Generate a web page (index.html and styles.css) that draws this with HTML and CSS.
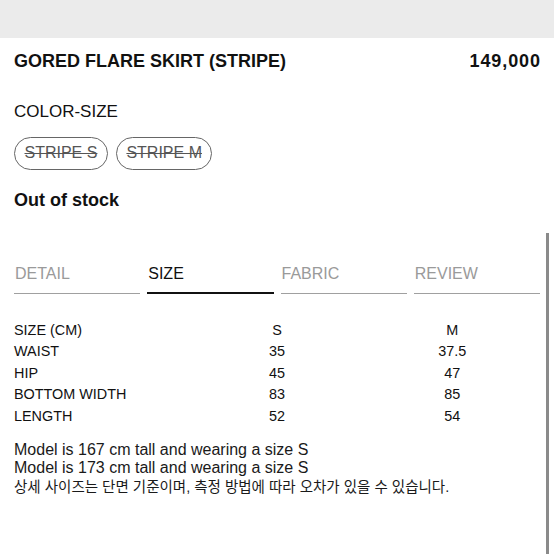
FILE: index.html
```html
<!DOCTYPE html>
<html lang="ko">
<head>
<meta charset="utf-8">
<link rel="stylesheet" href="styles.css">
</head>
<body>
<div class="topbar"></div>
<div class="content">
  <div class="title-row">
    <h1 class="title">GORED FLARE SKIRT (STRIPE)</h1>
    <div class="price">149,000</div>
  </div>
  <div class="label">COLOR-SIZE</div>
  <div class="pills">
    <span class="pill">STRIPE S</span>
    <span class="pill">STRIPE M</span>
  </div>
  <div class="stock">Out of stock</div>
  <div class="tabs">
    <div class="tab">DETAIL</div>
    <div class="tab active">SIZE</div>
    <div class="tab">FABRIC</div>
    <div class="tab">REVIEW</div>
  </div>
  <div class="table">
    <div class="row"><span>SIZE (CM)</span><span>S</span><span>M</span></div>
    <div class="row"><span>WAIST</span><span>35</span><span>37.5</span></div>
    <div class="row"><span>HIP</span><span>45</span><span>47</span></div>
    <div class="row"><span>BOTTOM WIDTH</span><span>83</span><span>85</span></div>
    <div class="row"><span>LENGTH</span><span>52</span><span>54</span></div>
  </div>
  <div class="notes">
    <p>Model is 167 cm tall and wearing a size S</p>
    <p>Model is 173 cm tall and wearing a size S</p>
    <p class="ko">상세 사이즈는 단면 기준이며, 측정 방법에 따라 오차가 있을 수 있습니다.</p>
  </div>
</div>
<div class="scrollbar"></div>
</body>
</html>
```

FILE: styles.css
```css
* { box-sizing: border-box; margin: 0; padding: 0; }
html, body { width: 554px; height: 554px; overflow: hidden; background: #fff; }
body {
  position: relative;
  font-family: "Liberation Sans", Arial, "Noto Sans CJK KR", sans-serif;
  color: #111;
}
.topbar { height: 38px; background: #ebebeb; }
.content { width: 554px; padding: 0 14px; }
.title-row {
  display: flex;
  justify-content: space-between;
  align-items: center;
  height: 46px;
}
.title { font-size: 18px; font-weight: 700; line-height: 22px; }
.price { font-size: 18px; font-weight: 700; letter-spacing: 0.9px; margin-right: -0.9px; line-height: 22px; }
.label { margin-top: 18px; font-size: 17px; line-height: 20px; color: #111; }
.pills { display: flex; gap: 8px; margin-top: 15px; }
.pill {
  display: inline-flex;
  align-items: center;
  justify-content: center;
  height: 32.5px;
  padding: 0 9.5px;
  border: 1px solid #666;
  border-radius: 17px;
  font-size: 16px;
  color: #555;
  text-decoration: line-through;
  text-decoration-thickness: 1px;
}
.stock { margin-top: 19px; font-size: 18px; font-weight: 700; line-height: 22px; }
.tabs {
  display: grid;
  grid-template-columns: repeat(4, 1fr);
  column-gap: 7px;
  align-items: start;
  margin-top: 53px;
}
.tab {
  font-size: 16px;
  line-height: 20px;
  color: #9a9a9a;
  padding: 0 0 9px 1px;
  border-bottom: 1px solid #a0a0a0;
}
.tab.active { color: #111; padding-bottom: 8px; border-bottom: 2px solid #111; }
.table { margin-top: 26px; font-size: 14.4px; color: #111; }
.row {
  display: grid;
  grid-template-columns: 1fr 1fr 1fr;
  height: 21.5px;
  line-height: 21.5px;
}
.row span:nth-child(2), .row span:nth-child(3) { text-align: center; }
.notes { margin-top: 14px; font-size: 16px; line-height: 18.4px; color: #1a1a1a; }
.notes .ko { font-size: 14.5px; }
.scrollbar {
  position: absolute;
  left: 546px;
  top: 233px;
  width: 3px;
  height: 330px;
  background: #8a8a8a;
}
```
